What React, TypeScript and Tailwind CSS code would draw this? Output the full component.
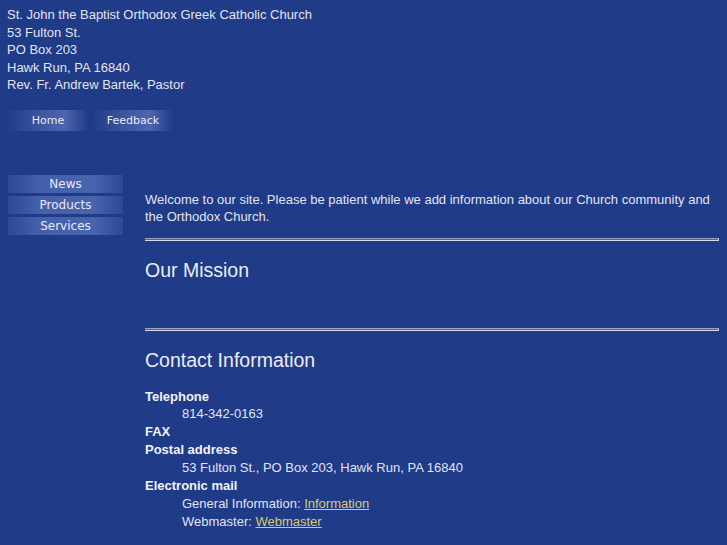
import React from "react";

const sans = { fontFamily: '"Liberation Sans", Arial, sans-serif' };

function Rule({ className }: { className: string }) {
  return (
    <div className={className}>
      <div className="h-[1px] bg-[#9aa3bf]" />
      <div className="h-[1px] bg-[#51669f] border-r border-r-[#d5dbed]" />
      <div className="h-[1px] bg-[#d5dbed]" />
    </div>
  );
}

export default function App() {
  return (
    <div
      className="min-h-[545px] w-full bg-[#1f3a86] text-[#e2e4ee] bg-[repeating-linear-gradient(0deg,#1f3a86_0px,#1f3a86_2px,#213c89_2px,#213c89_3px)]"
      style={sans}
    >
      <div className="pt-[6px] pl-[7px] text-[13px] leading-[17.5px]">
        <div>St. John the Baptist Orthodox Greek Catholic Church</div>
        <div>53 Fulton St.</div>
        <div>PO Box 203</div>
        <div>Hawk Run, PA 16840</div>
        <div>Rev. Fr. Andrew Bartek, Pastor</div>
      </div>

      <div
        className="mt-[16px] ml-[8px] flex gap-[5px] text-[11px] text-[#e8eaf2]"
        style={{ fontFamily: '"DejaVu Sans", Verdana, sans-serif' }}
      >
        {["Home", "Feedback"].map((t) => (
          <div
            key={t}
            className="flex h-[21px] w-[80px] items-center justify-center pt-[2px] bg-[linear-gradient(to_right,#213c88,#3f58a2_45%,#4d66ae_70%,#213c88)]"
          >
            {t}
          </div>
        ))}
      </div>

      <div className="mt-[44px] flex items-start">
        <div
          className="ml-[8px] w-[115px] flex flex-col gap-[3px] text-[12px] text-[#e8eaf2]"
          style={{ fontFamily: '"DejaVu Sans", Verdana, sans-serif' }}
        >
          {["News", "Products", "Services"].map((t) => (
            <div
              key={t}
              className="flex h-[18px] items-center justify-center pt-[1px] bg-[linear-gradient(to_right,#2d4894,#4560aa_25%,#4864ad_75%,#2d4894)]"
            >
              {t}
            </div>
          ))}
        </div>

        <div className="ml-[22px] w-[575px] pt-[16px]">
          <p className="text-[13px] leading-[17px]">
            Welcome to our site. Please be patient while we add information about our Church community and
            the Orthodox Church.
          </p>
          <Rule className="mt-[13px] mr-[1px]" />
          <h2 className="mt-[18px] text-[19.5px] leading-[22px] text-[#eceef5]">Our Mission</h2>
          <Rule className="mt-[47px] mr-[1px]" />
          <h2 className="mt-[18px] text-[19.5px] leading-[22px] text-[#eceef5]">Contact Information</h2>
          <div className="mt-[17px] text-[13px] leading-[17.9px]">
            <div className="font-bold text-[#f2f3f8]">Telephone</div>
            <div className="pl-[37px]">814-342-0163</div>
            <div className="font-bold text-[#f2f3f8]">FAX</div>
            <div className="font-bold text-[#f2f3f8]">Postal address</div>
            <div className="pl-[37px]">53 Fulton St., PO Box 203, Hawk Run, PA 16840</div>
            <div className="font-bold text-[#f2f3f8]">Electronic mail</div>
            <div className="pl-[37px]">
              General Information: <a href="#" className="text-[#d6ce6c] underline">Information</a>
            </div>
            <div className="pl-[37px]">
              Webmaster: <a href="#" className="text-[#d6ce6c] underline">Webmaster</a>
            </div>
          </div>
        </div>
      </div>
    </div>
  );
}
